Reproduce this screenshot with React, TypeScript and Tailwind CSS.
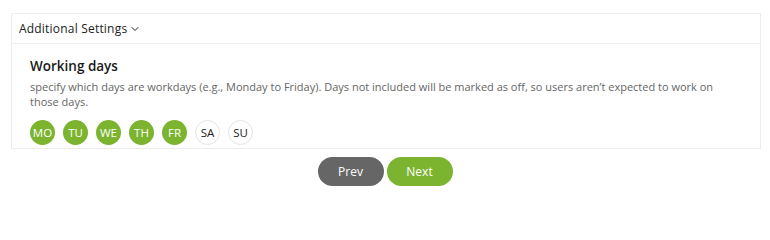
import { ChevronDown } from "lucide-react";

const days = [
  { label: "MO", on: true },
  { label: "TU", on: true },
  { label: "WE", on: true },
  { label: "TH", on: true },
  { label: "FR", on: true },
  { label: "SA", on: false },
  { label: "SU", on: false },
];

export default function App() {
  return (
    <div className="w-[770px] h-[207px] bg-white font-['Open_Sans',sans-serif] text-[#222]">
      <div className="pt-[13px] px-[11px]">
        <div className="border border-[#ececec] w-[750px]">
          <div className="h-[30px] flex items-center px-[7px] border-b border-[#f0f0f0] text-[12px] tracking-[0.2px] text-[#222]">
            Additional Settings
            <ChevronDown className="w-3 h-3 ml-[2px]" strokeWidth={2} />
          </div>
          <div className="pl-[18px] pr-[16px] pt-[12px] pb-[3px]">
            <h3 className="text-[13.5px] font-semibold leading-[20px] text-[#1a1a1a]">Working days</h3>
            <p className="text-[11px] leading-[15px] text-[#666] mt-[3px]">
              specify which days are workdays (e.g., Monday to Friday). Days not included will be marked as off, so users aren’t expected to work on those days.
            </p>
            <div className="flex gap-[8px] mt-[11px]">
              {days.map((d) =>
                d.on ? (
                  <span
                    key={d.label}
                    className="w-[25px] h-[25px] rounded-full bg-[#7cb32f] text-white text-[11.5px] flex items-center justify-center"
                  >
                    {d.label}
                  </span>
                ) : (
                  <span
                    key={d.label}
                    className="w-[25px] h-[25px] rounded-full border border-[#e4e4e4] bg-white text-[#222] text-[11.5px] flex items-center justify-center"
                  >
                    {d.label}
                  </span>
                )
              )}
            </div>
          </div>
        </div>
      </div>
      <div className="flex justify-center gap-[3px] mt-[8px]">
        <button className="w-[66px] h-[29px] rounded-full bg-[#666666] text-white text-[12px]">Prev</button>
        <button className="w-[66px] h-[29px] rounded-full bg-[#7cb32f] text-white text-[12px]">Next</button>
      </div>
    </div>
  );
}
